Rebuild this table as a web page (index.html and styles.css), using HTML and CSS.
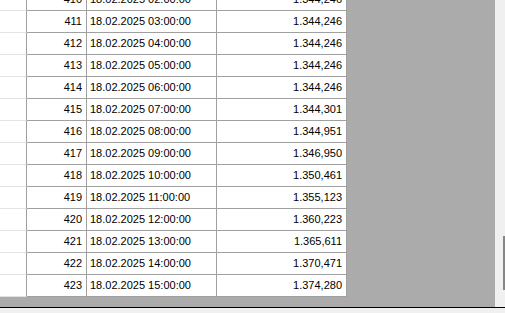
FILE: index.html
```html
<!DOCTYPE html>
<html>
<head>
<meta charset="utf-8">
<link rel="stylesheet" href="styles.css">
</head>
<body>
<div class="window">
  <div class="main">
    <div class="grid-area">
      <div class="table">
        <div class="hdr"></div><div class="cell num">410</div><div class="cell date">18.02.2025 02:00:00</div><div class="cell val">1.344,246</div>
        <div class="hdr"></div><div class="cell num">411</div><div class="cell date">18.02.2025 03:00:00</div><div class="cell val">1.344,246</div>
        <div class="hdr"></div><div class="cell num">412</div><div class="cell date">18.02.2025 04:00:00</div><div class="cell val">1.344,246</div>
        <div class="hdr"></div><div class="cell num">413</div><div class="cell date">18.02.2025 05:00:00</div><div class="cell val">1.344,246</div>
        <div class="hdr"></div><div class="cell num">414</div><div class="cell date">18.02.2025 06:00:00</div><div class="cell val">1.344,246</div>
        <div class="hdr"></div><div class="cell num">415</div><div class="cell date">18.02.2025 07:00:00</div><div class="cell val">1.344,301</div>
        <div class="hdr"></div><div class="cell num">416</div><div class="cell date">18.02.2025 08:00:00</div><div class="cell val">1.344,951</div>
        <div class="hdr"></div><div class="cell num">417</div><div class="cell date">18.02.2025 09:00:00</div><div class="cell val">1.346,950</div>
        <div class="hdr"></div><div class="cell num">418</div><div class="cell date">18.02.2025 10:00:00</div><div class="cell val">1.350,461</div>
        <div class="hdr"></div><div class="cell num">419</div><div class="cell date">18.02.2025 11:00:00</div><div class="cell val">1.355,123</div>
        <div class="hdr"></div><div class="cell num">420</div><div class="cell date">18.02.2025 12:00:00</div><div class="cell val">1.360,223</div>
        <div class="hdr"></div><div class="cell num">421</div><div class="cell date">18.02.2025 13:00:00</div><div class="cell val">1.365,611</div>
        <div class="hdr"></div><div class="cell num">422</div><div class="cell date">18.02.2025 14:00:00</div><div class="cell val">1.370,471</div>
        <div class="hdr"></div><div class="cell num">423</div><div class="cell date">18.02.2025 15:00:00</div><div class="cell val">1.374,280</div>
      </div>
    </div>
    <div class="vscroll"><div class="thumb"></div></div>
  </div>
  <div class="status"></div>
</div>
</body>
</html>
```

FILE: styles.css
```css
* { box-sizing: border-box; }
html, body { margin: 0; padding: 0; }
body {
  background: #f0f0f0;
  font-family: "Liberation Sans", Arial, sans-serif;
  font-size: 11px;
  color: #000;
  width: 505px;
  height: 313px;
  overflow: hidden;
}
.window { display: flex; flex-direction: column; height: 313px; }
.main { display: flex; height: 307px; }
.grid-area {
  flex: 1;
  background: #ababab;
  overflow: hidden;
}
.table {
  display: grid;
  grid-template-columns: 27px 60px 130px 130px;
  grid-auto-rows: 22px;
  width: 347px;
  margin-top: -11px;
  background: #fff;
}
.hdr {
  border-right: 1px solid #a0a0a0;
  border-bottom: 1px solid #e3e3e3;
  background: #fff;
}
.cell {
  border-right: 1px solid #a0a0a0;
  border-bottom: 1px solid #a0a0a0;
  line-height: 21px;
  white-space: nowrap;
  overflow: hidden;
}
.num, .val { text-align: right; padding-right: 4px; }
.date { padding-left: 3px; }
.vscroll {
  width: 10px;
  background: #f0f0f0;
  display: flex;
  flex-direction: column;
  padding-top: 236px;
  padding-left: 8px;
}
.thumb { width: 2px; height: 54px; background: #868686; }
.status {
  flex: 1;
  border-top: 1px solid #000;
  background: #f0f0f0;
}
```
